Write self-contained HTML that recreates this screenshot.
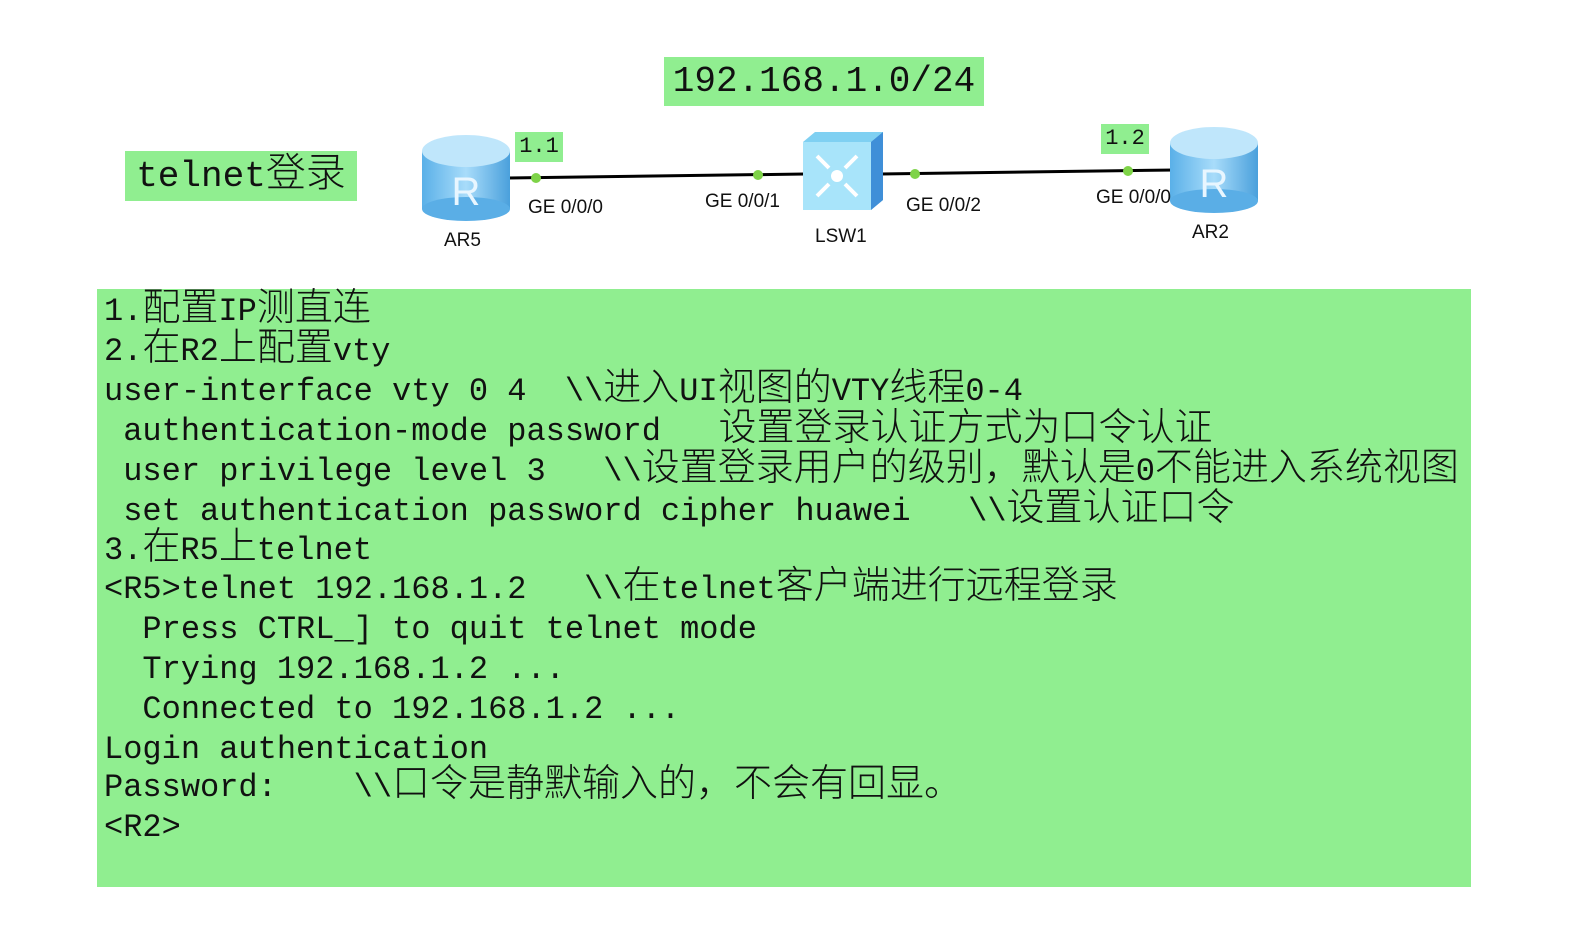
<!DOCTYPE html>
<html><head><meta charset="utf-8"><style>
html,body{margin:0;padding:0;background:#fff;width:1582px;height:937px;overflow:hidden;position:relative;font-family:"Liberation Sans",sans-serif}
.box{position:absolute;left:97px;top:289px;width:1374px;height:598px;background:#90ee90}
.l{position:absolute;left:104px;height:40px;line-height:40px;font-family:"Liberation Mono",monospace;font-size:32px;white-space:pre;color:#111}
.c{font-family:"Noto Sans CJK SC",sans-serif;font-size:38px;font-weight:300;line-height:0}
.lab{position:absolute;font-size:19px;color:#111}
.tag{position:absolute;background:#90ee90;font-family:"Liberation Mono",monospace;color:#111}
</style></head><body>
<div class="tag" style="left:664px;top:57px;width:320px;height:49px;font-size:36px;line-height:49px;text-align:center">192.168.1.0/24</div>
<div class="tag" style="left:125px;top:151px;width:232px;height:50px;font-size:36px;line-height:52px;text-align:center">telnet<span class="c" style="font-size:40px">登录</span></div>
<div class="tag" style="left:515px;top:132px;width:48px;height:30px;font-size:22px;line-height:30px;text-align:center">1.1</div>
<div class="tag" style="left:1101px;top:124px;width:48px;height:30px;font-size:22px;line-height:30px;text-align:center">1.2</div>
<svg width="1582" height="300" style="position:absolute;left:0;top:0">
<defs><linearGradient id="g" x1="0" x2="1"><stop offset="0" stop-color="#5ab0e8"/><stop offset=".5" stop-color="#a8dcfa"/><stop offset="1" stop-color="#4aa0dc"/></linearGradient></defs>
<line x1="505" y1="178" x2="805" y2="174" stroke="#000" stroke-width="3"/>
<line x1="880" y1="174" x2="1175" y2="170" stroke="#000" stroke-width="3"/>
<circle cx="536" cy="178" r="5" fill="#7ed348"/><circle cx="758" cy="175" r="5" fill="#7ed348"/>
<circle cx="915" cy="174" r="5" fill="#7ed348"/><circle cx="1128" cy="171" r="5" fill="#7ed348"/>
<g transform="translate(422,135)"><rect x="0" y="16" width="88" height="58" fill="url(#g)"/><ellipse cx="44" cy="74" rx="44" ry="12" fill="#5aaee6"/><ellipse cx="44" cy="16" rx="44" ry="16" fill="#bfe6fb"/><text x="44" y="70" text-anchor="middle" font-size="40" fill="#e8f6ff" font-family="Liberation Sans">R</text></g>
<g transform="translate(1170,127)"><rect x="0" y="16" width="88" height="58" fill="url(#g)"/><ellipse cx="44" cy="74" rx="44" ry="12" fill="#5aaee6"/><ellipse cx="44" cy="16" rx="44" ry="16" fill="#bfe6fb"/><text x="44" y="70" text-anchor="middle" font-size="40" fill="#e8f6ff" font-family="Liberation Sans">R</text></g>
<g transform="translate(803,132)"><polygon points="0,10 12,0 80,0 80,68 68,78 0,78" fill="#7fd0f2"/><polygon points="68,10 80,0 80,68 68,78" fill="#3f8fd8"/><rect x="0" y="10" width="68" height="68" fill="#a8e4fa"/><circle cx="34" cy="44" r="6" fill="#fff"/><path d="M14 24l12 12M54 24l-12 12M14 64l12-12M54 64l-12-12" stroke="#fff" stroke-width="4"/></g>
</svg>
<div class="lab" style="left:528px;top:197px">GE 0/0/0</div>
<div class="lab" style="left:705px;top:191px">GE 0/0/1</div>
<div class="lab" style="left:906px;top:195px">GE 0/0/2</div>
<div class="lab" style="left:1096px;top:187px">GE 0/0/0</div>
<div class="lab" style="left:444px;top:230px">AR5</div>
<div class="lab" style="left:815px;top:226px">LSW1</div>
<div class="lab" style="left:1192px;top:222px">AR2</div>
<div class="box"></div>
<div class="l" style="top:292px">1.<span class="c">配置</span>IP<span class="c">测直连</span></div>
<div class="l" style="top:332px">2.<span class="c">在</span>R2<span class="c">上配置</span>vty</div>
<div class="l" style="top:372px">user-interface vty 0 4  \\<span class="c">进入</span>UI<span class="c">视图的</span>VTY<span class="c">线程</span>0-4</div>
<div class="l" style="top:412px"> authentication-mode password   <span class="c">设置登录认证方式为口令认证</span></div>
<div class="l" style="top:452px"> user privilege level 3   \\<span class="c">设置登录用户的级别，默认是</span>0<span class="c">不能进入系统视图</span></div>
<div class="l" style="top:492px"> set authentication password cipher huawei   \\<span class="c">设置认证口令</span></div>
<div class="l" style="top:531px">3.<span class="c">在</span>R5<span class="c">上</span>telnet</div>
<div class="l" style="top:570px">&lt;R5&gt;telnet 192.168.1.2   \\<span class="c">在</span>telnet<span class="c">客户端进行远程登录</span></div>
<div class="l" style="top:610px">  Press CTRL_] to quit telnet mode</div>
<div class="l" style="top:650px">  Trying 192.168.1.2 ...</div>
<div class="l" style="top:690px">  Connected to 192.168.1.2 ...</div>
<div class="l" style="top:730px">Login authentication</div>
<div class="l" style="top:768px">Password:    \\<span class="c">口令是静默输入的，不会有回显。</span></div>
<div class="l" style="top:808px">&lt;R2&gt;</div>
</body></html>
